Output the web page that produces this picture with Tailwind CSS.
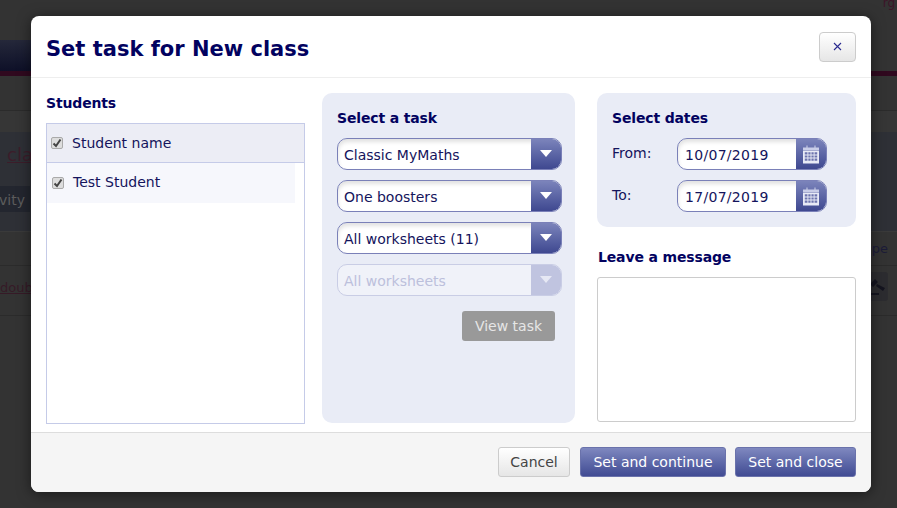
<!DOCTYPE html>
<html lang="en">
<head>
    <meta charset="UTF-8">
    <meta name="viewport" content="width=device-width, initial-scale=1.0">
    <title>Set task</title>
    <script src="https://cdn.jsdelivr.net/npm/@tailwindcss/browser@4"></script>
</head>
<body class="bg-[#333333] font-['DejaVu_Sans',sans-serif] text-[14px] text-[#14145c]">
<div class="relative w-[897px] h-[508px] overflow-hidden">

    <!-- page behind the backdrop -->
    <div class="flex flex-col h-full text-[#1c1c38]">
        <div class="h-[40px] flex justify-end pr-[2px] text-[12px] leading-[6px] text-[#3d1528]">rg</div>
        <div class="h-[31px] w-[100px] bg-gradient-to-b from-[#25283a] to-[#0e1028]"></div>
        <div class="h-[5px] bg-[#30091f]"></div>
        <div class="h-[35px] border-b border-[#2b2b2b]"></div>
        <div class="h-[21px] bg-[#363636]"></div>
        <div class="h-[100px] bg-[#2e3036] border-b border-[#3a3a3a] flex flex-col">
            <div class="h-[54px] pl-[7px] pt-[11px] text-[18px] leading-[24px] text-[#3c1d2a]"><span class="underline">cla</span></div>
            <div class="w-[30px] h-[26px] bg-[#23262f] flex items-center justify-end text-[#5c5c5c] pr-[5px] pt-[2px]">vity</div>
        </div>
        <div class="h-[34px] border-b border-[#2b2b2b] flex justify-end items-center pr-[9px] pt-[1px] text-[13px]">pe</div>
        <div class="h-[50px] border-b border-[#2b2b2b] flex justify-between items-center">
            <span class="text-[13px] text-[#361a27] underline pb-[5px]">doub</span>
            <div class="w-[23px] h-[29px] mr-[9px] mb-[9px] bg-[#2c2c30] rounded-[3px] flex items-center justify-center">
                <svg width="20" height="22" viewBox="0 0 20 22"><path d="M3 20h9v-2H3zM3 9l5-5 3 3-5 5zM10 9l8 4-2 3-7-5z" fill="#14141f"/></svg>
            </div>
        </div>
    </div>

    <!-- modal -->
    <div class="absolute left-[31px] top-[16px] w-[840px] h-[476px] flex flex-col bg-white rounded-[8px] shadow-[0_2px_14px_rgba(0,0,0,0.5)] overflow-hidden">
        <div class="h-[62px] shrink-0 border-b border-[#eeeeee] flex items-center justify-between pl-[15px] pr-[15px]">
            <h1 class="text-[21px] font-bold text-[#02025f] pt-[7px]">Set task for New class</h1>
            <button class="w-[37px] h-[30px] rounded-[4px] border border-[#cccccc] bg-gradient-to-b from-white to-[#e6e6e6] flex items-center justify-center">
                <svg width="9" height="9" viewBox="0 0 9 9"><path d="M1 1l7 7M8 1L1 8" stroke="#2a2a90" stroke-width="1.1" fill="none"/></svg>
            </button>
        </div>

        <div class="flex-1 flex pl-[15px] pr-[15px] pt-[15px] gap-[17px]">
            <!-- students -->
            <div class="w-[259px]">
                <h2 class="font-bold text-[#02025f] tracking-[-0.15px] h-[15px] flex items-center mt-[3px]">Students</h2>
                <div class="mt-[12px] h-[301px] border border-[#c5cbe8]">
                    <div class="h-[39px] bg-[#ecedf5] border-b border-[#c5cbe8] flex items-center pl-[4px] gap-[9px]">
                        <span class="w-[12px] h-[12px] rounded-[2px] border border-[#aaaaaa] bg-[#dddddd] flex items-center justify-center">
                            <svg width="10" height="10" viewBox="0 0 10 10"><path d="M1.500 5.500L4 8l4.500-6.500" stroke="#444444" stroke-width="2" fill="none"/></svg>
                        </span>
                        <span>Student name</span>
                    </div>
                    <div class="h-[40px] w-[248px] bg-[#f6f7fc] flex items-center pl-[5px] gap-[9px] pb-[1px]">
                        <span class="w-[12px] h-[12px] rounded-[2px] border border-[#aaaaaa] bg-[#dddddd] flex items-center justify-center">
                            <svg width="10" height="10" viewBox="0 0 10 10"><path d="M1.500 5.500L4 8l4.500-6.500" stroke="#444444" stroke-width="2" fill="none"/></svg>
                        </span>
                        <span>Test Student</span>
                    </div>
                </div>
            </div>

            <!-- select a task -->
            <div class="w-[253px] h-[330px] bg-[#e9ecf6] rounded-[10px] pl-[15px] pr-[13px] py-[15px] flex flex-col gap-[10px]">
                <h2 class="font-bold text-[#02025f] tracking-[-0.15px] h-[20px] flex items-center">Select a task</h2>
                <div class="h-[32px] flex rounded-[10px] border border-[#7a80b8] overflow-hidden bg-white shadow-[inset_0_3px_4px_rgba(0,0,0,0.12)]">
                    <span class="flex-1 pl-[6px] pt-[3px] flex items-center">Classic MyMaths</span>
                    <span class="w-[30px] bg-gradient-to-b from-[#7c84bb] to-[#3f4890] flex items-center justify-center">
                        <svg width="12" height="8" viewBox="0 0 12 8"><path d="M0 0h12L6 7z" fill="#ffffff"/></svg>
                    </span>
                </div>
                <div class="h-[32px] flex rounded-[10px] border border-[#7a80b8] overflow-hidden bg-white shadow-[inset_0_3px_4px_rgba(0,0,0,0.12)]">
                    <span class="flex-1 pl-[6px] pt-[3px] flex items-center">One boosters</span>
                    <span class="w-[30px] bg-gradient-to-b from-[#7c84bb] to-[#3f4890] flex items-center justify-center">
                        <svg width="12" height="8" viewBox="0 0 12 8"><path d="M0 0h12L6 7z" fill="#ffffff"/></svg>
                    </span>
                </div>
                <div class="h-[32px] flex rounded-[10px] border border-[#7a80b8] overflow-hidden bg-white shadow-[inset_0_3px_4px_rgba(0,0,0,0.12)]">
                    <span class="flex-1 pl-[6px] pt-[3px] flex items-center">All worksheets (11)</span>
                    <span class="w-[30px] bg-gradient-to-b from-[#7c84bb] to-[#3f4890] flex items-center justify-center">
                        <svg width="12" height="8" viewBox="0 0 12 8"><path d="M0 0h12L6 7z" fill="#ffffff"/></svg>
                    </span>
                </div>
                <div class="h-[32px] flex rounded-[10px] border border-[#c9cde5] overflow-hidden bg-[#f0f2f9] text-[#bcc0dc]">
                    <span class="flex-1 pl-[6px] pt-[3px] flex items-center">All worksheets</span>
                    <span class="w-[30px] bg-[#c0c4e0] flex items-center justify-center">
                        <svg width="12" height="8" viewBox="0 0 12 8"><path d="M0 0h12L6 7z" fill="#e6e8f4"/></svg>
                    </span>
                </div>
                <div class="flex justify-end pr-[7px] pt-[5px]">
                    <button class="w-[93px] h-[30px] rounded-[3px] bg-[#999999] text-[#e6e6e6]">View task</button>
                </div>
            </div>

            <!-- dates and message -->
            <div class="w-[259px] ml-[5px] flex flex-col h-[330px]">
                <div class="h-[134px] bg-[#e9ecf6] rounded-[10px] p-[15px] flex flex-col gap-[10px]">
                    <h2 class="font-bold text-[#02025f] tracking-[-0.15px] h-[20px] flex items-center">Select dates</h2>
                    <div class="flex h-[32px]">
                        <span class="w-[65px] pt-[5px]">From:</span>
                        <div class="w-[150px] flex rounded-[10px] border border-[#7a80b8] overflow-hidden bg-white shadow-[inset_0_3px_4px_rgba(0,0,0,0.12)]">
                            <span class="flex-1 pl-[7px] pt-[3px] flex items-center tracking-[0.3px]">10/07/2019</span>
                            <span class="w-[30px] bg-gradient-to-b from-[#7c84bb] to-[#3f4890] flex items-center justify-center">
                                <svg width="16" height="19" viewBox="0 0 18 20"><path d="M4 0h1v3H4zM13 0h1v3h-1z" fill="#dfe2f2"/><path d="M0 2h18v3H0z" fill="#c9cde8"/><path d="M0 5.500h18V20H0z" fill="#e8eaf6"/><path d="M2 7.500h3v2.500H2zM6 7.500h2.500v2.500H6zM9.500 7.500H12v2.500H9.500zM13 7.500h3v2.500h-3zM2 11h3v2.500H2zM6 11h2.500v2.500H6zM9.500 11H12v2.500H9.500zM13 11h3v2.500h-3zM2 14.500h3V17H2zM6 14.500h2.500V17H6zM9.500 14.500H12V17H9.500zM13 14.500h3V17h-3z" fill="#6d74ae"/></svg>
                            </span>
                        </div>
                    </div>
                    <div class="flex h-[32px]">
                        <span class="w-[65px] pt-[5px]">To:</span>
                        <div class="w-[150px] flex rounded-[10px] border border-[#7a80b8] overflow-hidden bg-white shadow-[inset_0_3px_4px_rgba(0,0,0,0.12)]">
                            <span class="flex-1 pl-[7px] pt-[3px] flex items-center tracking-[0.3px]">17/07/2019</span>
                            <span class="w-[30px] bg-gradient-to-b from-[#7c84bb] to-[#3f4890] flex items-center justify-center">
                                <svg width="16" height="19" viewBox="0 0 18 20"><path d="M4 0h1v3H4zM13 0h1v3h-1z" fill="#dfe2f2"/><path d="M0 2h18v3H0z" fill="#c9cde8"/><path d="M0 5.500h18V20H0z" fill="#e8eaf6"/><path d="M2 7.500h3v2.500H2zM6 7.500h2.500v2.500H6zM9.500 7.500H12v2.500H9.500zM13 7.500h3v2.500h-3zM2 11h3v2.500H2zM6 11h2.500v2.500H6zM9.500 11H12v2.500H9.500zM13 11h3v2.500h-3zM2 14.500h3V17H2zM6 14.500h2.500V17H6zM9.500 14.500H12V17H9.500zM13 14.500h3V17h-3z" fill="#6d74ae"/></svg>
                            </span>
                        </div>
                    </div>
                </div>
                <h2 class="font-bold text-[#02025f] tracking-[-0.15px] h-[20px] flex items-center mt-[20px] pl-[1px]">Leave a message</h2>
                <textarea class="mt-[10px] h-[145px] border border-[#cccccc] rounded-[3px] bg-white resize-none"></textarea>
            </div>
        </div>

        <!-- footer -->
        <div class="h-[60px] shrink-0 bg-[#f5f5f5] border-t border-[#dddddd] flex items-center justify-end pr-[15px] pb-[2px]">
            <button class="w-[72px] h-[30px] pt-[2px] rounded-[3px] border border-[#cccccc] bg-gradient-to-b from-white to-[#e6e6e6] text-[#444444]">Cancel</button>
            <button class="w-[146px] h-[30px] pt-[2px] ml-[10px] rounded-[3px] border border-[#6a72ab] bg-gradient-to-b from-[#7f88bf] to-[#414b93] text-white">Set and continue</button>
            <button class="w-[121px] h-[30px] pt-[2px] ml-[9px] rounded-[3px] border border-[#6a72ab] bg-gradient-to-b from-[#7f88bf] to-[#414b93] text-white">Set and close</button>
        </div>
    </div>
</div>
</body>
</html>
